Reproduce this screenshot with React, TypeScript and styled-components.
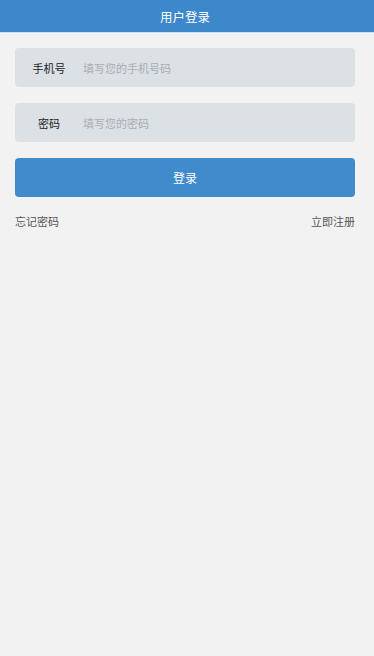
import { createGlobalStyle } from "styled-components";
import styled from "styled-components";

const GlobalStyle = createGlobalStyle`
  html, body {
    margin: 0;
    padding: 0;
    background: #f2f2f2;
    font-family: "Noto Sans CJK SC", "Noto Sans", sans-serif;
  }
  * {
    box-sizing: border-box;
  }
`;

const Page = styled.div`
  min-height: 656px;
  background: #f2f2f2;
`;

const Header = styled.div`
  height: 33px;
  background: #3d88ca;
  border-bottom: 1px solid #c9e0f2;
  color: #fff;
  font-size: 12.5px;
  display: flex;
  align-items: center;
  justify-content: center;
  padding-right: 4px;
`;

const Form = styled.div`
  width: 340px;
  margin-left: 15px;
  padding-top: 15px;
  display: flex;
  flex-direction: column;
  gap: 16px;
`;

const Field = styled.div`
  height: 39px;
  border-radius: 4px;
  background: #dbe1e5;
  display: flex;
  align-items: center;
`;

const Label = styled.label`
  width: 68px;
  text-align: center;
  font-size: 11px;
  color: #222;
`;

const Input = styled.input`
  flex: 1;
  height: 100%;
  border: none;
  outline: none;
  background: transparent;
  font-family: inherit;
  font-size: 11px;
  color: #333;
  padding: 0;
  &::placeholder {
    color: #a9aeb2;
  }
`;

const Button = styled.button`
  height: 39px;
  border: none;
  border-radius: 4px;
  background: #3f8bcc;
  color: #fff;
  font-family: inherit;
  font-size: 12px;
  cursor: pointer;
`;

const Links = styled.div`
  display: flex;
  justify-content: space-between;
  margin-top: 1px;
  font-size: 11px;
  line-height: 14px;
  color: #555;
`;

const Link = styled.a`
  color: inherit;
  text-decoration: none;
`;

export default function App() {
  return (
    <Page>
      <GlobalStyle />
      <Header>用户登录</Header>
      <Form>
        <Field>
          <Label>手机号</Label>
          <Input type="tel" placeholder="填写您的手机号码" />
        </Field>
        <Field>
          <Label>密码</Label>
          <Input type="password" placeholder="填写您的密码" />
        </Field>
        <Button>登录</Button>
        <Links>
          <Link href="#">忘记密码</Link>
          <Link href="#">立即注册</Link>
        </Links>
      </Form>
    </Page>
  );
}
